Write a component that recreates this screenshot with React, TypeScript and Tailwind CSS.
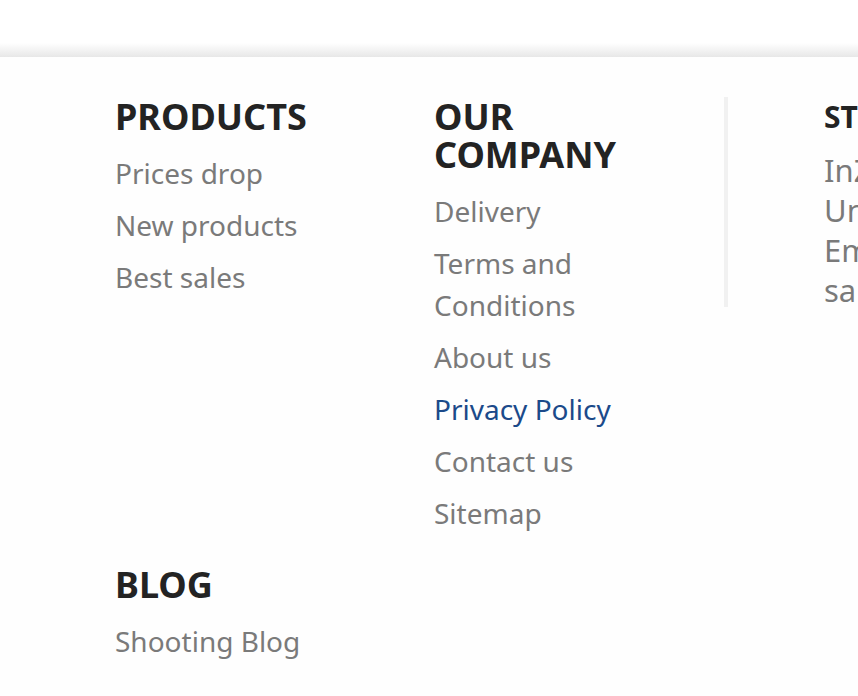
import React from "react";

const font = { fontFamily: '"Noto Sans", "Open Sans", sans-serif' };

function Heading({ children }: { children: React.ReactNode }) {
  return (
    <h3 className="text-[36px] font-bold uppercase leading-[38px] text-[#232323]">{children}</h3>
  );
}

function LinkItem({ children, active }: { children: React.ReactNode; active?: boolean }) {
  return (
    <li className={`text-[28px] leading-[42px] ${active ? "text-[#1b4a8a]" : "text-[#7a7a7a]"}`}>
      {children}
    </li>
  );
}

export default function App() {
  return (
    <div className="w-[858px] h-[696px] overflow-hidden bg-white flex flex-col" style={font}>
      <div className="h-[57px] shrink-0 flex flex-col">
        <div className="h-[43px] bg-white" />
        <div className="h-[14px] bg-gradient-to-b from-white to-[#e7e7e7]" />
      </div>
      <div className="flex-1 bg-[#fefefe] pl-[115px] pt-[41px]">
        <div className="flex">
          <div className="w-[319px] shrink-0">
            <Heading>Products</Heading>
            <ul className="mt-[16px] flex flex-col gap-[10px]">
              <LinkItem>Prices drop</LinkItem>
              <LinkItem>New products</LinkItem>
              <LinkItem>Best sales</LinkItem>
            </ul>
          </div>
          <div className="w-[290px] shrink-0 pr-[40px]">
            <Heading>
              Our
              <br />
              Company
            </Heading>
            <ul className="mt-[16px] flex flex-col gap-[10px]">
              <LinkItem>Delivery</LinkItem>
              <LinkItem>
                Terms and
                <br />
                Conditions
              </LinkItem>
              <LinkItem>About us</LinkItem>
              <LinkItem active>Privacy Policy</LinkItem>
              <LinkItem>Contact us</LinkItem>
              <LinkItem>Sitemap</LinkItem>
            </ul>
          </div>
          <div className="w-[300px] shrink-0 self-start border-l-4 border-[#f1f1f1] pl-[96px] h-[210px] whitespace-nowrap -mt-[1px]">
            <h3 className="text-[30px] font-bold uppercase leading-[38px] text-[#232323] pt-[1px]">
              Store information
            </h3>
            <div className="mt-[14px] text-[31px] leading-[40px] text-[#7a7a7a]">
              <p>InZone Shop</p>
              <p>United States</p>
              <p>Email us:</p>
              <p>sales@inzone.com</p>
            </div>
          </div>
        </div>
        <div className="mt-[32px]">
          <Heading>Blog</Heading>
          <ul className="mt-[16px] flex flex-col gap-[10px]">
            <LinkItem>Shooting Blog</LinkItem>
          </ul>
        </div>
      </div>
    </div>
  );
}
